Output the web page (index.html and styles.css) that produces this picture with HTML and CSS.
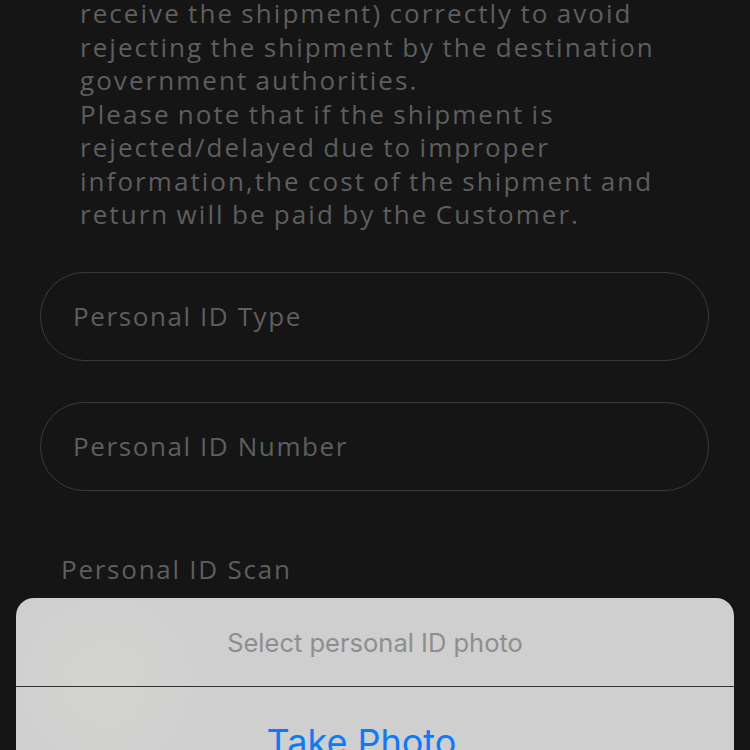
FILE: index.html
```html
<!DOCTYPE html>
<html>
<head>
<meta charset="utf-8">
<link rel="stylesheet" href="styles.css">
</head>
<body>
<main class="page">
  <p class="note">receive the shipment) correctly to avoid<br>rejecting the shipment by the destination<br>government authorities.<br>Please note that if the shipment is<br>rejected/delayed due to improper<br>information,the cost of the shipment and<br>return will be paid by the Customer.</p>
  <div class="field">Personal ID Type</div>
  <div class="field">Personal ID Number</div>
  <div class="label">Personal ID Scan</div>
</main>
<div class="sheet">
  <div class="sheet-title">Select personal ID photo</div>
  <div class="sheet-btn">Take Photo</div>
</div>
</body>
</html>
```
FILE: styles.css
```css
html, body {
  margin: 0;
  padding: 0;
  width: 750px;
  height: 750px;
  overflow: hidden;
  background: #151515;
}
.page {
  font-family: "Open Sans", "Liberation Sans", sans-serif;
  color: #5e5e5e;
  display: flex;
  flex-direction: column;
}
.note {
  margin: -3px 0 0 80px;
  font-size: 26px;
  line-height: 33.5px;
  letter-spacing: 2.05px;
  word-spacing: -1.5px;
}
.field {
  margin: 40px 41px 0 40px;
  height: 87px;
  border: 1px solid #3a3a3a;
  border-radius: 44px;
  display: flex;
  align-items: center;
  padding-left: 32px;
  font-size: 26px;
  letter-spacing: 1.6px;
}
.field + .field {
  margin-top: 41px;
}
.label {
  margin: 61px 0 0 61px;
  font-size: 26px;
  line-height: 34px;
  letter-spacing: 1.75px;
}
.sheet {
  position: absolute;
  left: 16px;
  top: 598px;
  width: 718px;
  height: 152px;
  overflow: hidden;
  background: radial-gradient(circle at 90px 85px, #d4d5d2 0, #cfcfcf 110px);
  border-radius: 18px 18px 0 0;
  font-family: "Inter", "Roboto", sans-serif;
}
.sheet-title {
  height: 88px;
  display: flex;
  align-items: center;
  justify-content: center;
  font-size: 25.5px;
  color: #8e8e8e;
  border-bottom: 1px solid #333;
}
.sheet-btn {
  height: 110px;
  display: flex;
  align-items: center;
  justify-content: center;
  padding-right: 27px;
  font-size: 36px;
  color: #0a7aff;
}
```
